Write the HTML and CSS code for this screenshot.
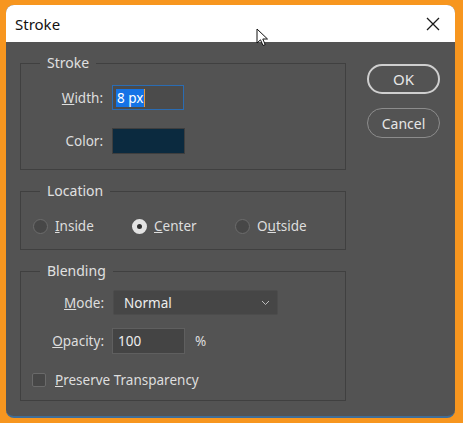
FILE: index.html
```html
<!DOCTYPE html>
<html lang="en">
<head>
    <meta charset="UTF-8">
    <title>Stroke</title>
    <link rel="stylesheet" href="styles.css">
</head>
<body>

    <div class="window">
        <div class="titlebar">
            <span class="title">Stroke</span>
            <svg class="close" width="14" height="14" viewBox="0 0 14 14">
                <path d="M1 1 L13 13 M13 1 L1 13" stroke="#1a1a1a" stroke-width="1.3" fill="none"/>
            </svg>
        </div>

        <div class="dialog">
            <div class="groups">
                <fieldset class="group stroke">
                    <legend>Stroke</legend>
                    <div class="row">
                        <label class="label"><u>W</u>idth:</label>
                        <div class="field focused"><span class="sel">8 px</span><span class="caret"></span></div>
                    </div>
                    <div class="row">
                        <label class="label">Color:</label>
                        <div class="swatch"></div>
                    </div>
                </fieldset>

                <fieldset class="group location">
                    <legend>Location</legend>
                    <div class="radios">
                        <div class="radio r-inside"><span class="dot"></span><span><u>I</u>nside</span></div>
                        <div class="radio r-center"><span class="dot on"></span><span><u>C</u>enter</span></div>
                        <div class="radio"><span class="dot"></span><span>O<u>u</u>tside</span></div>
                    </div>
                </fieldset>

                <fieldset class="group blending">
                    <legend>Blending</legend>
                    <div class="row">
                        <label class="label"><u>M</u>ode:</label>
                        <div class="select">
                            <span>Normal</span>
                            <svg width="9" height="6" viewBox="0 0 9 6">
                                <path d="M1 1 L4.5 4.5 L8 1" stroke="#bdbdbd" stroke-width="1" fill="none"/>
                            </svg>
                        </div>
                    </div>
                    <div class="row">
                        <label class="label"><u>O</u>pacity:</label>
                        <div class="field">100</div>
                        <span class="unit">%</span>
                    </div>
                    <div class="check">
                        <span class="box"></span><span><u>P</u>reserve Transparency</span>
                    </div>
                </fieldset>
            </div>

            <div class="buttons">
                <button class="btn primary">OK</button>
                <button class="btn">Cancel</button>
            </div>
        </div>
    </div>

    <!-- mouse pointer resting on the title bar -->
    <svg class="pointer" width="14" height="20" viewBox="0 0 14 20">
        <path d="M1 1 L1 15 L4.5 11.8 L7 17.5 L9.2 16.6 L6.8 11 L11.5 11 Z" fill="#fff" stroke="#111" stroke-width="1" stroke-linejoin="round"/>
    </svg>

</body>
</html>
```

FILE: styles.css
```css
body {
    margin: 0;
    padding: 5px 0 0 6px;
    width: 463px;
    height: 423px;
    box-sizing: border-box;
    background-color: #f7961f;
    font-family: "Noto Sans", "Open Sans", sans-serif;
    overflow: hidden;
    position: relative;
}
.window {
    width: 449px;
    height: 411px;
    border-radius: 8px;
    overflow: hidden;
    background-color: #535353;
    border-bottom: 2px solid #3f6d98;
    display: flex;
    flex-direction: column;
}
.titlebar {
    height: 37px;
    flex-shrink: 0;
    background-color: #fff;
    display: flex;
    align-items: center;
    justify-content: space-between;
    padding: 0 15px 0 9px;
}
.title {
    font-size: 15px;
    color: #111;
}
.close {
    margin-top: 1px;
}
.dialog {
    flex: 1;
    display: flex;
    padding: 11px 0 0 14px;
    color: #dedede;
    font-size: 13.5px;
}
.groups {
    width: 326px;
}
.group {
    margin: 0;
    padding: 0;
    border: 1px solid #404040;
    min-width: 0;
}
.group legend {
    margin-left: 19px;
    padding: 0 7px;
    font-size: 14px;
    line-height: 20px;
    color: #e0e0e0;
}
.group + .group {
    margin-top: 11px;
}
.stroke {
    padding: 12px 0 15px;
}
.row {
    display: flex;
    align-items: center;
    gap: 9px;
}
.row + .row {
    margin-top: 18px;
}
.label {
    width: 82px;
    text-align: right;
}
.field {
    width: 72px;
    height: 25px;
    box-sizing: border-box;
    border: 1px solid #5f5f5f;
    background-color: #444;
    padding-left: 5px;
    display: flex;
    align-items: center;
    color: #eee;
}
.field.focused {
    border-color: #2a6cb3;
    background-color: #4b4b4b;
    padding-left: 3px;
}
.sel {
    background-color: #1473e6;
    color: #fff;
    line-height: 18px;
    padding: 0 1px;
}
.caret {
    width: 1px;
    height: 18px;
    background-color: #e89a3c;
}
.swatch {
    width: 73px;
    height: 26px;
    box-sizing: border-box;
    border: 1px solid #3e3e3e;
    background-color: #0b2a3f;
}
.location {
    padding: 16px 0 14px;
}
.radios {
    display: flex;
    padding-left: 12px;
}
.radio {
    display: flex;
    align-items: center;
    gap: 7px;
    height: 18px;
}
.r-inside {
    width: 99px;
}
.r-center {
    width: 103px;
}
.dot {
    width: 15px;
    height: 15px;
    box-sizing: border-box;
    border-radius: 50%;
    border: 1px solid #6c6c6c;
    background-color: #474747;
}
.dot.on {
    border: 5px solid #e2e2e2;
    background-color: #2e2e2e;
}
.blending {
    padding: 9px 0 10px;
}
.blending .row + .row {
    margin-top: 13px;
}
.blending .label {
    width: 83px;
}
.select {
    width: 165px;
    height: 25px;
    box-sizing: border-box;
    border: 1px solid #4c4c4c;
    border-radius: 2px;
    background-color: #464646;
    display: flex;
    align-items: center;
    justify-content: space-between;
    padding: 0 7px 0 10px;
    color: #eee;
}
.blending .field {
    width: 73px;
    height: 26px;
    margin-left: -1px;
}
.unit {
    margin-left: 1px;
}
.check {
    display: flex;
    align-items: center;
    gap: 9px;
    margin-top: 16px;
    padding-left: 11px;
    height: 20px;
}
.box {
    width: 14px;
    height: 14px;
    box-sizing: border-box;
    border: 1px solid #6a6a6a;
    border-radius: 2px;
    background-color: #474747;
}
.buttons {
    display: flex;
    flex-direction: column;
    gap: 14px;
    margin-left: 21px;
    padding-top: 11px;
}
.btn {
    width: 73px;
    height: 30px;
    border-radius: 15px;
    border: 1px solid #8c8c8c;
    background-color: transparent;
    color: #e6e6e6;
    font-family: "Noto Sans", "Open Sans", sans-serif;
    font-size: 14px;
    padding: 0;
}
.btn.primary {
    border: 2px solid #cfcfcf;
    font-size: 15px;
}
.pointer {
    position: absolute;
    left: 256px;
    top: 28px;
}
```
